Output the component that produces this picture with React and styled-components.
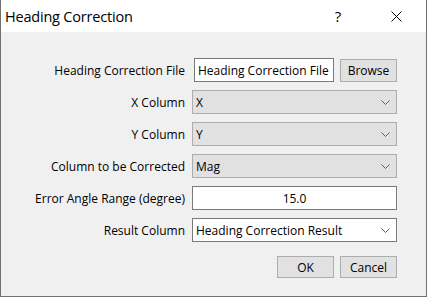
import React from "react";
import styled, { createGlobalStyle } from "styled-components";

const GlobalStyle = createGlobalStyle`
  html, body {
    margin: 0;
    padding: 0;
    background: #ffffff;
  }
  body {
    font-family: "Segoe UI", "Open Sans", "Noto Sans", sans-serif;
    font-size: 12px;
    color: #000000;
  }
`;

const Window = styled.div`
  width: 427px;
  height: 297px;
  box-sizing: border-box;
  border: 1px solid #707070;
  border-top: none;
  display: flex;
  flex-direction: column;
  background: #f0f0f0;
  overflow: hidden;
`;

const TitleBar = styled.div`
  height: 32px;
  flex: none;
  background: #ffffff;
  display: flex;
  align-items: center;
  padding-left: 4px;
`;

const Title = styled.div`
  flex: 1;
  font-size: 14.5px;
  letter-spacing: -0.2px;
`;

const TitleButton = styled.div`
  width: ${(p) => p.$width}px;
  height: 32px;
  display: flex;
  align-items: center;
  justify-content: center;
  font-size: 15px;
`;

const Body = styled.div`
  flex: 1;
  padding: 26px 29px 0 0;
  display: flex;
  flex-direction: column;
`;

const Form = styled.div`
  display: grid;
  grid-template-columns: 184px 205px;
  grid-auto-rows: 24px;
  row-gap: 8px;
  column-gap: 7px;
  align-items: center;
`;

const Label = styled.div`
  text-align: right;
  white-space: nowrap;
`;

const FileRow = styled.div`
  display: flex;
  align-items: center;
  gap: 6px;
  padding-left: 2px;
`;

const TextInput = styled.div`
  box-sizing: border-box;
  height: 24px;
  width: ${(p) => (p.$width ? `${p.$width}px` : "100%")};
  background: #ffffff;
  border: 1px solid #7a7a7a;
  display: flex;
  align-items: center;
  justify-content: ${(p) => (p.$center ? "center" : "flex-start")};
  padding: 0 3px;
  white-space: nowrap;
  overflow: hidden;
`;

const Combo = styled.div`
  box-sizing: border-box;
  height: 24px;
  background: ${(p) => (p.$editable ? "#ffffff" : "#e1e1e1")};
  border: 1px solid ${(p) => (p.$editable ? "#7a7a7a" : "#adadad")};
  display: flex;
  align-items: center;
  padding: 0 6px 0 3px;
  white-space: nowrap;
`;

const ComboText = styled.span`
  flex: 1;
`;

const Button = styled.div`
  box-sizing: border-box;
  width: 57px;
  height: ${(p) => p.$height || 22}px;
  background: #e1e1e1;
  border: 1px solid #adadad;
  display: flex;
  align-items: center;
  justify-content: center;
`;

const ButtonRow = styled.div`
  display: flex;
  justify-content: flex-end;
  gap: 6px;
  margin-top: 14px;
`;

const Chevron = () => (
  <svg width="9" height="5" viewBox="0 0 9 5">
    <path d="M0.5 0.5 L4.5 4.5 L8.5 0.5" fill="none" stroke="#606060" strokeWidth="1" />
  </svg>
);

const CloseIcon = () => (
  <svg width="11" height="11" viewBox="0 0 11 11">
    <path d="M0.5 0.5 L10.5 10.5 M10.5 0.5 L0.5 10.5" stroke="#000" strokeWidth="1" />
  </svg>
);

const ComboBox = ({ value, editable }) => (
  <Combo $editable={editable}>
    <ComboText>{value}</ComboText>
    <Chevron />
  </Combo>
);

export default function App() {
  return (
    <>
      <GlobalStyle />
      <Window>
        <TitleBar>
          <Title>Heading Correction</Title>
          <TitleButton $width={70}>?</TitleButton>
          <TitleButton $width={46}>
            <CloseIcon />
          </TitleButton>
          <TitleButton $width={7} />
        </TitleBar>
        <Body>
          <Form>
            <Label>Heading Correction File</Label>
            <FileRow>
              <TextInput $width={140}>Heading Correction File</TextInput>
              <Button $height={23}>Browse</Button>
            </FileRow>

            <Label>X Column</Label>
            <ComboBox value="X" />

            <Label>Y Column</Label>
            <ComboBox value="Y" />

            <Label>Column to be Corrected</Label>
            <ComboBox value="Mag" />

            <Label>Error Angle Range (degree)</Label>
            <TextInput $center>15.0</TextInput>

            <Label>Result Column</Label>
            <ComboBox value="Heading Correction Result" editable />
          </Form>
          <ButtonRow>
            <Button>OK</Button>
            <Button>Cancel</Button>
          </ButtonRow>
        </Body>
      </Window>
    </>
  );
}
